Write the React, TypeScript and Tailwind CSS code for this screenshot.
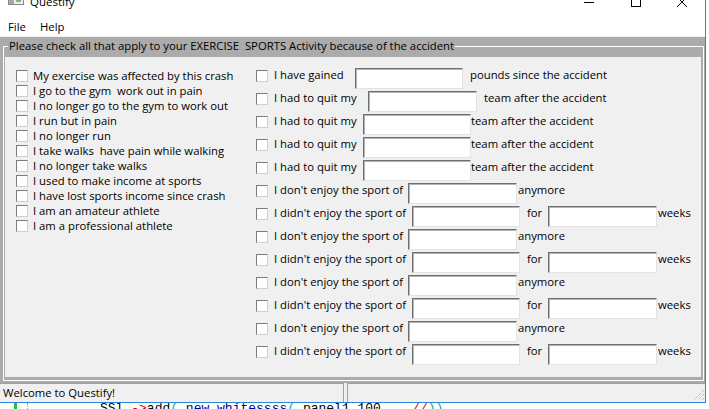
import React from "react";

const checkCls =
  "block w-[12px] h-[12px] shrink-0 bg-white border border-t-[#7c7c7c] border-l-[#7c7c7c] border-r-[#cfcfcf] border-b-[#cfcfcf]";

function Check({ className = "" }: { className?: string }) {
  return <span className={checkCls + " " + className} />;
}

function Field({ className }: { className: string }) {
  return (
    <span
      className={
        "block h-[21px] shrink-0 bg-white border border-t-[#6f6f6f] border-l-[#6f6f6f] border-r-[#e3e3e3] border-b-[#e3e3e3] shadow-[inset_1px_1px_0_#b4b4b4] " +
        className
      }
    />
  );
}

const leftItems = [
  "My exercise was affected by this crash",
  "I go to the gym  work out in pain",
  "I no longer go to the gym to work out",
  "I run but in pain",
  "I no longer run",
  "I take walks  have pain while walking",
  "I no longer take walks",
  "I used to make income at sports",
  "I have lost sports income since crash",
  "I am an amateur athlete",
  "I am a professional athlete",
];

type RowProps = {
  label: string;
  lw: string;
  iw: string;
  sfx?: string;
  sml?: string;
  weeks?: boolean;
};

function RightRow({ label, lw, iw, sfx, sml = "", weeks }: RowProps) {
  return (
    <div className="h-[23px] flex items-start">
      <Check className="mt-[2px]" />
      <span className={"ml-[6px] leading-[14px] whitespace-pre shrink-0 " + lw}>{label}</span>
      <Field className={iw} />
      {weeks ? (
        <>
          <span className="ml-[7px] w-[21px] shrink-0 leading-[14px]">for</span>
          <Field className="w-[109px]" />
          <span className="ml-[1px] leading-[14px]">weeks</span>
        </>
      ) : (
        <span className={"leading-[14px] whitespace-nowrap " + sml}>{sfx}</span>
      )}
    </div>
  );
}

function DontRow() {
  return (
    <RightRow label="I don't enjoy the sport of" lw="w-[134px]" iw="w-[109px]" sfx="anymore" sml="ml-[1px]" />
  );
}
function DidntRow() {
  return <RightRow label="I didn't enjoy the sport of" lw="w-[138px]" iw="w-[108px]" weeks />;
}

export default function App() {
  return (
    <div className="w-[709px] h-[409px] bg-white overflow-hidden font-['Open_Sans',sans-serif] text-[11.3px] text-black">
      <div className="w-[706px] border-r border-b border-[#2b86d6] flex flex-col">
        {/* title bar */}
        <div className="h-[19px] overflow-hidden bg-white">
          <div className="h-[30px] -mt-[13px] flex items-center">
            <svg className="ml-[8px] mb-[8px] w-[16px] h-[16px] shrink-0" viewBox="0 0 16 16">
              <rect x="0.5" y="1.5" width="15" height="13" fill="#eeeeee" stroke="#8a8a8a" />
              <rect x="1" y="2" width="5" height="12" fill="#a8a8a8" />
              <rect x="1" y="2" width="14" height="2" fill="#6e8fb0" />
              <rect x="8" y="8" width="5" height="4" fill="#7cb87c" />
            </svg>
            <span className="ml-[6px] text-[11.5px]">Questify</span>
            <div className="flex-1" />
            <div className="w-[46px] flex justify-center">
              <svg width="10" height="10" viewBox="0 0 10 10">
                <path d="M0 5.5 H10" stroke="#000" strokeWidth="1" />
              </svg>
            </div>
            <div className="w-[46px] flex justify-center ml-[1px]">
              <svg width="10" height="10" viewBox="0 0 10 10">
                <rect x="0.5" y="0.5" width="9" height="9" fill="none" stroke="#000" strokeWidth="1" />
              </svg>
            </div>
            <div className="w-[46px] flex justify-center">
              <svg width="10" height="10" viewBox="0 0 10 10">
                <path d="M0 0 L10 10 M10 0 L0 10" stroke="#000" strokeWidth="1" />
              </svg>
            </div>
          </div>
        </div>
        {/* menu bar */}
        <div className="h-[17px] bg-white flex items-center pl-[8px]">
          <span className="w-[32px]">File</span>
          <span>Help</span>
        </div>
        <div className="h-[1px] bg-[#f0f0f0]" />
        {/* gray band with titled border */}
        <div className="h-[346px] bg-[#ababab] pt-[2px] pl-[3px] pr-[1px]">
          <fieldset className="m-0 h-[342px] border border-white pl-[1px] pr-[2px] pb-[2px] pt-0">
            <legend className="ml-[3px] px-[1px] leading-[14px] whitespace-pre">
              Please check all that apply to your EXERCISE  SPORTS Activity because of the accident
            </legend>
            <div className="mt-[4px] h-[320px] bg-[#f0f0f0] flex pt-[11px] pl-[11px]">
              <div className="w-[240px] flex flex-col">
                {leftItems.map((t) => (
                  <div key={t} className="h-[15px] flex items-center">
                    <Check />
                    <span className="ml-[5px] leading-[15px] whitespace-pre">{t}</span>
                  </div>
                ))}
              </div>
              <div className="flex flex-col">
                <RightRow
                  label="I have gained"
                  lw="w-[81px]"
                  iw="w-[108px]"
                  sfx="pounds since the accident"
                  sml="ml-[7px]"
                />
                <RightRow
                  label="I had to quit my"
                  lw="w-[94px]"
                  iw="w-[109px]"
                  sfx="team after the accident"
                  sml="ml-[7px]"
                />
                <RightRow label="I had to quit my" lw="w-[89px]" iw="w-[108px]" sfx="team after the accident" />
                <RightRow label="I had to quit my" lw="w-[89px]" iw="w-[108px]" sfx="team after the accident" />
                <RightRow label="I had to quit my" lw="w-[89px]" iw="w-[108px]" sfx="team after the accident" />
                <DontRow />
                <DidntRow />
                <DontRow />
                <DidntRow />
                <DontRow />
                <DidntRow />
                <DontRow />
                <DidntRow />
              </div>
            </div>
          </fieldset>
        </div>
        {/* status bar */}
        <div className="h-[19px] bg-[#f0f0f0] flex">
          <div className="w-[344px] border-t border-r border-[#a0a0a0] flex items-center pl-[3px] pt-[1px]">
            Welcome to Questify!
          </div>
          <div className="ml-[3px] flex-1 border-t border-l border-[#a0a0a0] flex justify-end items-end">
            <svg width="12" height="12" viewBox="0 0 12 12" className="mb-[1px]">
              <path d="M11 1 L1 11 M11 5 L5 11 M11 9 L9 11" stroke="#a8a8a8" strokeWidth="1" strokeDasharray="1 1" />
            </svg>
          </div>
        </div>
      </div>
      {/* editor remnants below window */}
      <div className="h-[6px] overflow-hidden flex">
        <span className="ml-[14px] w-[3px] h-full bg-[#22c040] shrink-0" />
        <span className="ml-[10px] w-[1px] h-full border-l border-dotted border-[#9a9a9a] shrink-0" />
        <span className="ml-[72px] -mt-[2px] font-['Liberation_Mono',monospace] text-[13px] leading-[16px] whitespace-pre">
          <span className="text-[#000]">SSl </span>
          <span className="text-[#d00]">-&gt;</span>
          <span className="text-[#000]">add</span>
          <span className="text-[#0aa]">( </span>
          <span className="text-[#00008b]">new whitessss</span>
          <span className="text-[#0aa]">( </span>
          <span className="text-[#000]">panel1</span>
          <span className="text-[#d00]">,</span>
          <span className="text-[#000]">100</span>
          <span className="text-[#d00]">,   //</span>
          <span className="text-[#0aa]">))</span>
        </span>
      </div>
    </div>
  );
}
